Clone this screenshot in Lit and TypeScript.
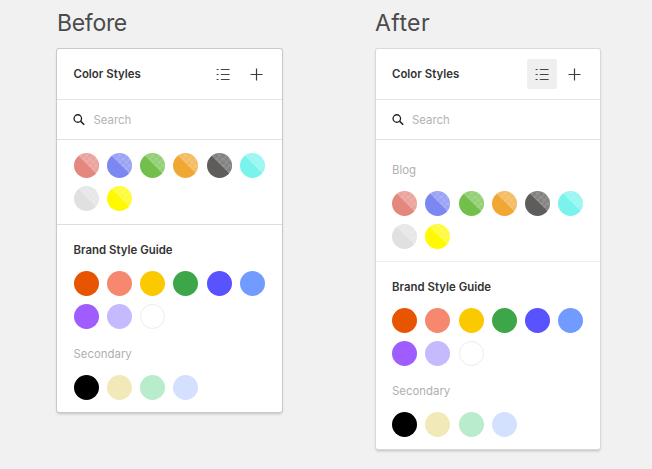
import { LitElement, html, css, svg, nothing } from "lit";
import { customElement, property } from "lit/decorators.js";
import { classMap } from "lit/directives/class-map.js";
import { styleMap } from "lit/directives/style-map.js";

const BLOG = ["#e4877f", "#7c87f1", "#72c04b", "#f1a733", "#5e5d5c", "#7af3ed", "#e0e0e0", "#fffa00"];
const BRAND = ["#e85500", "#f5886f", "#fbc900", "#3da648", "#5952ff", "#729bff", "#9f5cff", "#c6baff", "#ffffff"];
const SECONDARY = ["#000000", "#f2e9b8", "#b9ebcd", "#d3e1ff"];

const listIcon = svg`<svg width="14" height="13" viewBox="0 0 14 13">
  <path d="M0.6 1.5H2.6M4.8 1.5H13.6M0.6 6.5H2.6M4.8 6.5H13.6M0.6 11.5H2.6M4.8 11.5H13.6" fill="none" stroke="#454545" stroke-width="1.15"/>
</svg>`;
const plusIcon = svg`<svg width="13" height="13" viewBox="0 0 13 13">
  <path d="M6.5 0.5V12.5M0.5 6.5H12.5" fill="none" stroke="#3c3c3c" stroke-width="1.2"/>
</svg>`;
const searchIcon = svg`<svg width="12" height="12" viewBox="0 0 12 12">
  <circle cx="4.8" cy="4.5" r="3.75" fill="none" stroke="#222" stroke-width="1.3"/>
  <path d="M7.5 7.1L11.2 10.7" fill="none" stroke="#222" stroke-width="1.5"/>
</svg>`;

@customElement("color-swatches")
class ColorSwatches extends LitElement {
  @property({ attribute: false }) colors: string[] = [];
  @property({ type: Boolean }) translucent = false;

  static styles = css`
    :host { display: grid; grid-template-columns: repeat(6, 25px); gap: 8.3px; }
    .dot { position: relative; width: 25px; height: 25px; border-radius: 50%; overflow: hidden; }
    .outlined { box-sizing: border-box; border: 1px solid #ececec; }
    .translucent::after {
      content: ""; position: absolute; inset: 0;
      clip-path: polygon(8% 0, 100% 0, 100% 92%);
      background: conic-gradient(#ffffff54 25%, #ffffff3c 0 50%, #ffffff54 0 75%, #ffffff3c 0) 1px 1px / 6.6px 6.6px;
    }
  `;

  render() {
    return this.colors.map(
      (c) => html`<div
        class=${classMap({ dot: true, outlined: c === "#ffffff", translucent: this.translucent })}
        style=${styleMap({ backgroundColor: c })}
      ></div>`
    );
  }
}

@customElement("styles-panel")
class StylesPanel extends LitElement {
  @property({ type: Boolean, reflect: true }) after = false;

  static styles = css`
    :host {
      display: block; box-sizing: border-box; width: 225px; height: 363px;
      background: #fff; border-radius: 2px; color: #333;
      font: 400 11.4px/14px Inter, "Liberation Sans", sans-serif;
      box-shadow: 0 0 0 1px #c9c9c9, 0 2px 3px #00000030;
    }
    :host([after]) { width: 224px; height: 400px; box-shadow: 0 0 0 1px #d9d9d9, 0 2px 3px #00000038; }
    .header { display: flex; align-items: center; height: 50px; padding-left: 16.5px; border-bottom: 1px solid #e5e5e5; }
    .heading { font-weight: 600; letter-spacing: 0.02px; white-space: nowrap; }
    .header .heading { flex: 1; }
    .button { display: flex; align-items: center; justify-content: center; width: 30px; height: 30px; border-radius: 2px; }
    .active { background: #efefef; }
    .add { margin: 0 11px 0 3px; }
    :host([after]) .add { margin: 0 11px 0 2px; }
    svg { display: block; }
    .search { display: flex; align-items: center; gap: 8.5px; height: 39px; padding-left: 16px; color: #b3b3b3; border-bottom: 1px solid #e0e0e0; }
    .section { padding-left: 16.5px; }
    :host([after]) .header, :host([after]) .section { padding-left: 16px; }
    :host([after]) .search { padding-left: 15.5px; }
    .blog { box-sizing: border-box; height: 85px; padding-top: 13px; border-bottom: 1px solid #dedede; }
    :host([after]) .blog { height: 122px; padding-top: 23px; border-bottom-color: #eeeeee; }
    .label { color: #b0b0b0; }
    .blog .label { margin-bottom: 14px; }
    .brand { padding-top: 18px; }
    .brand .heading { margin-bottom: 14px; }
    .secondary { padding-top: 18px; }
    .secondary .label { margin-bottom: 14px; }
  `;

  render() {
    return html`
      <div class="header">
        <div class="heading">Color Styles</div>
        <div class=${classMap({ button: true, active: this.after })}>${listIcon}</div>
        <div class="button add">${plusIcon}</div>
      </div>
      <div class="search">${searchIcon}<span>Search</span></div>
      <div class="section blog">
        ${this.after ? html`<div class="label">Blog</div>` : nothing}
        <color-swatches .colors=${BLOG} translucent></color-swatches>
      </div>
      <div class="section brand">
        <div class="heading">Brand Style Guide</div>
        <color-swatches .colors=${BRAND}></color-swatches>
      </div>
      <div class="section secondary">
        <div class="label">Secondary</div>
        <color-swatches .colors=${SECONDARY}></color-swatches>
      </div>
    `;
  }
}

@customElement("app-root")
class AppRoot extends LitElement {
  static styles = css`
    :host { display: flex; gap: 94px; box-sizing: border-box; width: 652px; height: 469px; padding: 9px 0 0 57px; background: #f1f1f1; overflow: hidden; }
    .title { height: 40px; font: 400 23px/29px Inter, "Liberation Sans", sans-serif; color: #4b4b4b; letter-spacing: -0.3px; }
    .after { margin-left: -1px; letter-spacing: 0.4px; }
  `;

  render() {
    return html`
      <div><div class="title">Before</div><styles-panel></styles-panel></div>
      <div><div class="title after">After</div><styles-panel after></styles-panel></div>
    `;
  }
}
